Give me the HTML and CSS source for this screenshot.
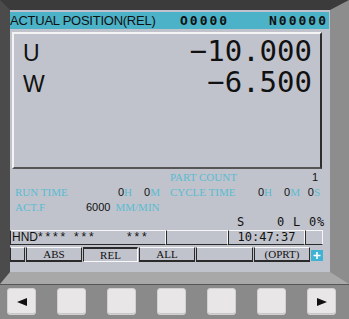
FILE: index.html
```html
<!DOCTYPE html>
<html lang="en">
<head>
    <meta charset="UTF-8">
    <title>Actual Position (REL)</title>
    <link rel="stylesheet" href="styles.css">
</head>
<body>

<div class="frame">
    <div class="screen">
        <div class="title">
            <span class="t-name">ACTUAL POSITION(REL)</span>
            <span class="t-prog">O0000</span>
            <span class="t-seq">N00000</span>
        </div>

        <div class="pos">
            <div class="axis"><span class="ax">U</span><span class="val">−10.000</span></div>
            <div class="axis"><span class="ax">W</span><span class="val">−6.500</span></div>
        </div>

        <div class="info">
            <div class="row">
                <div class="half-l"></div>
                <div class="half-r">
                    <span class="lbl">PART COUNT</span>
                    <span class="num count">1</span>
                </div>
            </div>
            <div class="row">
                <div class="half-l">
                    <span class="lbl">RUN TIME</span>
                    <span class="tc"><span class="num">0</span>H</span>
                    <span class="tc"><span class="num">0</span>M</span>
                </div>
                <div class="half-r">
                    <span class="lbl">CYCLE TIME</span>
                    <span class="tc"><span class="num">0</span>H</span>
                    <span class="tc"><span class="num">0</span>M</span>
                    <span class="tc tc-s"><span class="num">0</span>S</span>
                </div>
            </div>
            <div class="row">
                <div class="half-l">
                    <span class="lbl lbl-f">ACT.F</span>
                    <span class="num">6000</span>
                    <span class="unit">MM/MIN</span>
                </div>
            </div>
            <div class="row sline">S    0 L 0%</div>
        </div>

        <div class="status">
            <div class="sbox mode">HND<span class="stars">**** ***     ***</span></div>
            <div class="sbox w62"></div>
            <div class="sbox clock">10:47:37</div>
            <div class="sbox w18"></div>
        </div>

        <div class="softkeys">
            <div class="sk sk-small"></div>
            <div class="sk">ABS</div>
            <div class="sk sk-on w55">REL</div>
            <div class="sk">ALL</div>
            <div class="sk w57"></div>
            <div class="sk">(OPRT)</div>
            <div class="plus">
                <svg width="12" height="11" viewBox="0 0 12 11">
                    <path d="M6 2v7M2.5 5.5h7" stroke="#ffffff" stroke-width="1.6" fill="none"/>
                </svg>
            </div>
        </div>
    </div>
</div>

<div class="divider"></div>

<div class="keypad">
    <div class="key-btn">
        <svg width="10" height="8" viewBox="0 0 10 8"><polygon points="0,4 10,0 10,8" fill="#111"/></svg>
    </div>
    <div class="key-btn"></div>
    <div class="key-btn"></div>
    <div class="key-btn"></div>
    <div class="key-btn"></div>
    <div class="key-btn"></div>
    <div class="key-btn">
        <svg width="10" height="8" viewBox="0 0 10 8"><polygon points="10,4 0,0 0,8" fill="#111"/></svg>
    </div>
</div>

</body>
</html>
```

FILE: styles.css
```css
body {
    margin: 0;
    width: 349px;
    height: 319px;
    overflow: hidden;
    background-color: #8a8a8a;
    font-family: "Liberation Sans", Arial, sans-serif;
    color: #111;
}

/* monitor bezel, the border joins give the bevelled corners */
.frame {
    border-top: 10px solid #3b3b3b;
    border-left: 10px solid #4b4b4b;
    border-right: 19px solid #8d8d8d;
    border-bottom: 12px solid #a8a8a8;
    height: 262px;
}

.screen {
    background-color: #c0c3cc;
    height: 262px;
    padding-top: 2px;
    box-sizing: border-box;
}

.title {
    display: flex;
    align-items: center;
    width: 319px;
    height: 17px;
    line-height: 17px;
    background-color: #4cb2c8;
}

.t-name {
    width: 170px;
    font-size: 13px;
    letter-spacing: -0.25px;
}

.t-prog, .t-seq {
    font-family: "DejaVu Sans Mono", monospace;
    font-size: 13px;
    font-weight: bold;
    letter-spacing: 2px;
}

.t-prog {
    width: 89px;
}

.pos {
    margin: 3px 0 0 2px;
    width: 310px;
    height: 137px;
    box-sizing: border-box;
    border-top: 2px solid #f4f4f4;
    border-left: 2px solid #f4f4f4;
    border-right: 2px solid #2e2e2e;
    border-bottom: 2px solid #555;
    padding: 2px 8px 0 9px;
}

.axis {
    display: flex;
    justify-content: space-between;
    align-items: baseline;
    height: 31px;
    line-height: 31px;
}

.ax {
    font-size: 23px;
}

.val {
    font-family: "DejaVu Sans Mono", monospace;
    font-size: 29px;
}

.info {
    padding: 1px 0 0 5px;
    font-family: "Liberation Serif", "Times New Roman", serif;
    font-size: 11px;
    color: #5abcd2;
}

.row {
    display: flex;
    height: 15px;
    line-height: 15px;
}

.half-l {
    display: flex;
    width: 145px;
    padding-right: 10px;
}

.half-r {
    display: flex;
    width: 150px;
    padding-right: 1px;
}

.lbl {
    flex: 1;
}

.lbl-f {
    flex: none;
    width: 71px;
}

.num {
    font-family: "Liberation Sans", Arial, sans-serif;
    color: #111;
}

.count {
    padding-right: 2px;
}

.tc {
    width: 28px;
    text-align: right;
}

.tc-s {
    width: 20px;
}

.unit {
    margin-left: 5px;
}

.sline {
    padding-left: 222px;
    white-space: pre;
    font-family: "DejaVu Sans Mono", monospace;
    font-size: 12px;
    letter-spacing: 0.78px;
    color: #111;
}

.status {
    display: flex;
    height: 15px;
}

.sbox {
    box-sizing: border-box;
    height: 15px;
    border-top: 1px solid #f6f6f6;
    border-right: 1px solid #f6f6f6;
    border-left: 1px solid #2a2a2a;
    border-bottom: 1px solid #2a2a2a;
    line-height: 13px;
}

.mode {
    width: 156px;
    padding-left: 1px;
    font-size: 12px;
    white-space: pre;
}

.stars {
    letter-spacing: 2.8px;
}

.w62 {
    width: 62px;
}

.clock {
    width: 77px;
    text-align: center;
    font-family: "DejaVu Sans Mono", monospace;
    font-size: 12px;
}

.w18 {
    width: 18px;
}

.softkeys {
    display: flex;
    gap: 1px;
    margin-top: 2px;
    height: 15px;
}

.sk {
    box-sizing: border-box;
    width: 56px;
    height: 15px;
    border-top: 1px solid #f8f8f8;
    border-left: 1px solid #2a2a2a;
    border-right: 1px solid #2a2a2a;
    border-bottom: 2px solid #2a2a2a;
    font-family: "Liberation Serif", "Times New Roman", serif;
    font-size: 11px;
    line-height: 12px;
    text-align: center;
}

.sk-small {
    width: 15px;
}

.sk-on {
    border-top: 2px solid #2a2a2a;
    border-right: 1px solid #f8f8f8;
    border-bottom: 1px solid #f8f8f8;
}

.w55 {
    width: 55px;
}

.w57 {
    width: 57px;
}

.plus {
    width: 12px;
    height: 11px;
    margin-top: 3px;
    background-color: #3fb3d3;
}

.plus svg {
    display: block;
}

.divider {
    height: 1px;
    background-color: #565656;
}

.keypad {
    display: flex;
    gap: 21px;
    padding: 3px 0 0 7px;
}

.key-btn {
    width: 29px;
    height: 27px;
    box-sizing: border-box;
    background-color: #e8e6e6;
    border: 1px solid #d2d0d0;
    border-radius: 3px;
    box-shadow: inset 0 -1px #c9c7c7;
    display: flex;
    align-items: center;
    justify-content: center;
}
```
